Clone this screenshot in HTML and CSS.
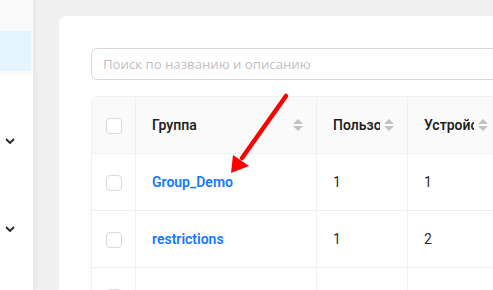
FILE: index.html
```html
<!DOCTYPE html>
<html lang="ru">
<head>
  <meta charset="UTF-8">
  <title>Группы</title>
  <link rel="stylesheet" href="styles.css">
</head>
<body>
  <aside class="sidebar">
    <div class="submenu">
      <div class="menu-item"></div>
      <div class="menu-item active"></div>
    </div>
    <div class="menu-group first">
      <svg class="chevron" width="10" height="6" viewBox="0 0 10 6"><path d="M1 1l4 4 4-4" fill="none" stroke="#262626" stroke-width="1.8"/></svg>
    </div>
    <div class="menu-group">
      <svg class="chevron" width="10" height="6" viewBox="0 0 10 6"><path d="M1 1l4 4 4-4" fill="none" stroke="#262626" stroke-width="1.8"/></svg>
    </div>
  </aside>

  <main class="content">
    <section class="card">
      <input class="search" type="text" placeholder="Поиск по названию и описанию">

      <table class="groups">
        <colgroup>
          <col class="col-check">
          <col class="col-name">
          <col class="col-users">
          <col class="col-devices">
        </colgroup>
        <thead>
          <tr>
            <th class="check-cell"><span class="checkbox"></span></th>
            <th><div class="th-inner"><span class="th-title">Группа</span><span class="sorter"><i class="up"></i><i class="down"></i></span></div></th>
            <th><div class="th-inner"><span class="th-title">Пользователи</span><span class="sorter"><i class="up"></i><i class="down"></i></span></div></th>
            <th><div class="th-inner"><span class="th-title">Устройства</span><span class="sorter"><i class="up"></i><i class="down"></i></span></div></th>
          </tr>
        </thead>
        <tbody>
          <tr>
            <td class="check-cell"><span class="checkbox"></span></td>
            <td><a class="group-link" href="#">Group_Demo</a></td>
            <td>1</td>
            <td>1</td>
          </tr>
          <tr>
            <td class="check-cell"><span class="checkbox"></span></td>
            <td><a class="group-link" href="#">restrictions</a></td>
            <td>1</td>
            <td>2</td>
          </tr>
          <tr>
            <td class="check-cell"><span class="checkbox"></span></td>
            <td><a class="group-link" href="#">lab_devices</a></td>
            <td>3</td>
            <td>4</td>
          </tr>
        </tbody>
      </table>
    </section>
  </main>

  <!-- annotation arrow drawn over the screenshot -->
  <svg class="annotation" width="493" height="290" viewBox="0 0 493 290">
    <line x1="286" y1="96" x2="242" y2="158" stroke="#ff0000" stroke-width="4.5" stroke-linecap="round"/>
    <polygon points="231,173 233,155 249,166" fill="#ff0000"/>
  </svg>
</body>
</html>
```

FILE: styles.css
```css
body {
  margin: 0;
  height: 290px;
  overflow: hidden;
  display: flex;
  font-family: Roboto, "Liberation Sans", sans-serif;
  font-size: 14px;
  color: rgba(0, 0, 0, 0.88);
  background: #f0f0f0;
}

.sidebar {
  width: 33px;
  flex: none;
  background: #fff;
  border-right: 1px solid #e8e8e8;
  box-shadow: 2px 0 4px rgba(0, 0, 0, 0.04);
}
.submenu {
  background: #fafafa;
  padding-bottom: 4px;
}
.menu-item {
  height: 31px;
}
.menu-item.active {
  height: 40px;
  margin-right: 2px;
  background: #e6f4ff;
}
.menu-group {
  height: 88px;
  display: flex;
  align-items: center;
  padding-left: 5px;
}
.menu-group.first {
  margin-top: 22px;
}
.chevron {
  display: block;
}

.content {
  flex: 1;
  min-width: 0;
  padding: 16px 0 0 25px;
}
.card {
  width: 600px;
  height: 400px;
  background: #fff;
  border-radius: 8px 0 0 0;
  padding: 32px;
}

.search {
  display: block;
  width: 100%;
  height: 32px;
  box-sizing: border-box;
  border: 1px solid #d9d9d9;
  border-radius: 6px;
  padding: 4px 11px;
  font-family: "Open Sans", sans-serif;
  font-size: 13.2px;
  outline: none;
}
.search::placeholder {
  color: #bfbfbf;
}

.groups {
  margin-top: 16px;
  width: 410px;
  table-layout: fixed;
  border-collapse: separate;
  border-spacing: 0;
  border-left: 1px solid #f0f0f0;
  border-top: 1px solid #f0f0f0;
  border-radius: 8px 0 0 0;
}
.col-check { width: 44px; }
.col-name { width: 181px; }
.col-users { width: 91px; }
.col-devices { width: 94px; }

.groups th,
.groups td {
  height: 57px;
  padding: 0 16px;
  border-right: 1px solid #f0f0f0;
  border-bottom: 1px solid #f0f0f0;
  text-align: left;
  box-sizing: border-box;
}
.groups th {
  background: #fafafa;
  font-weight: 600;
  color: rgba(0, 0, 0, 0.88);
  padding-right: 13px;
}
.groups th:first-child {
  border-top-left-radius: 8px;
}
.groups .check-cell {
  padding: 0;
  text-align: center;
}
.checkbox {
  display: inline-block;
  width: 16px;
  height: 16px;
  box-sizing: border-box;
  border: 1px solid #d9d9d9;
  border-radius: 4px;
  background: #fff;
  vertical-align: middle;
}

.th-inner {
  display: flex;
  align-items: center;
}
.th-title {
  flex: 1;
  min-width: 0;
  overflow: hidden;
  white-space: nowrap;
}
.sorter {
  flex: none;
  display: flex;
  flex-direction: column;
  gap: 2px;
  margin-left: 4px;
}
.sorter i {
  display: block;
  width: 0;
  height: 0;
  border-left: 5px solid transparent;
  border-right: 5px solid transparent;
}
.sorter .up { border-bottom: 5px solid #c2c2c2; }
.sorter .down { border-top: 5px solid #c2c2c2; }

.group-link {
  color: #1677ff;
  font-weight: 600;
  text-decoration: none;
}

.annotation {
  position: absolute;
  left: 0;
  top: 0;
  pointer-events: none;
}
```
